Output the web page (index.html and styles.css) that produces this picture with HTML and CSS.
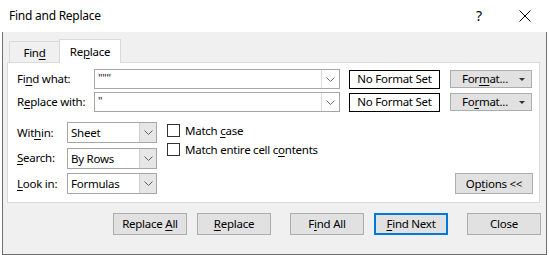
FILE: index.html
```html
<!DOCTYPE html>
<html>
<head>
<meta charset="utf-8">
<link rel="stylesheet" href="styles.css">
</head>
<body>
<div class="window">
  <div class="titlebar">
    <span class="title">Find and Replace</span>
    <span class="help">?</span>
    <svg class="close" width="12" height="12" viewBox="0 0 12 12"><path d="M0.5 0.5 L11.5 11.5 M11.5 0.5 L0.5 11.5" stroke="#000" stroke-width="1" fill="none"/></svg>
  </div>
  <div class="body">
    <div class="tabs">
      <div class="tab"><span>Fin<u>d</u></span></div>
      <div class="tab active"><span>Re<u>p</u>lace</span></div>
    </div>
    <div class="panel">
      <div class="row">
        <label class="lbl wide">Fi<u>n</u>d what:</label>
        <div class="combo"><span class="combo-text">"""</span><span class="combo-btn"><svg width="9" height="5" viewBox="0 0 9 5"><path d="M0.5 0.5 L4.5 4.5 L8.5 0.5" stroke="#707070" fill="none"/></svg></span></div>
        <div class="nofmt">No Format Set</div>
        <div class="btn fmt"><span>For<u>m</u>at...</span><span class="tri"></span></div>
      </div>
      <div class="row">
        <label class="lbl wide">R<u>e</u>place with:</label>
        <div class="combo"><span class="combo-text">"</span><span class="combo-btn"><svg width="9" height="5" viewBox="0 0 9 5"><path d="M0.5 0.5 L4.5 4.5 L8.5 0.5" stroke="#707070" fill="none"/></svg></span></div>
        <div class="nofmt">No Format Set</div>
        <div class="btn fmt"><span>Fo<u>r</u>mat...</span><span class="tri"></span></div>
      </div>
      <div class="options-area">
        <div class="grid-sel">
          <label class="lbl">Wit<u>h</u>in:</label>
          <div class="select"><span class="sel-text">Sheet</span><span class="sel-btn"><svg width="9" height="5" viewBox="0 0 9 5"><path d="M0.5 0.5 L4.5 4.5 L8.5 0.5" stroke="#606060" fill="none"/></svg></span></div>
          <label class="lbl"><u>S</u>earch:</label>
          <div class="select"><span class="sel-text">By Rows</span><span class="sel-btn"><svg width="9" height="5" viewBox="0 0 9 5"><path d="M0.5 0.5 L4.5 4.5 L8.5 0.5" stroke="#606060" fill="none"/></svg></span></div>
          <label class="lbl"><u>L</u>ook in:</label>
          <div class="select"><span class="sel-text">Formulas</span><span class="sel-btn"><svg width="9" height="5" viewBox="0 0 9 5"><path d="M0.5 0.5 L4.5 4.5 L8.5 0.5" stroke="#606060" fill="none"/></svg></span></div>
        </div>
        <div class="checks">
          <div class="check"><span class="box"></span><span>Match <u>c</u>ase</span></div>
          <div class="check"><span class="box"></span><span>Match entire cell c<u>o</u>ntents</span></div>
        </div>
        <div class="spacer"></div>
        <div class="btn options"><span>Op<u>t</u>ions &lt;&lt;</span></div>
      </div>
    </div>
    <div class="actions">
      <div class="btn act"><span>Replace <u>A</u>ll</span></div>
      <div class="btn act"><span><u>R</u>eplace</span></div>
      <div class="btn act wide-gap"><span>F<u>i</u>nd All</span></div>
      <div class="btn act default"><span><u>F</u>ind Next</span></div>
      <div class="btn act wide-gap"><span>Close</span></div>
    </div>
  </div>
</div>
</body>
</html>
```

FILE: styles.css
```css
* { box-sizing: border-box; }
html, body { margin: 0; padding: 0; background: #ffffff; }
body {
  font-family: "Noto Sans", "DejaVu Sans", sans-serif;
  font-size: 11.5px;
  letter-spacing: -0.25px;
  color: #000;
}
u { text-decoration: underline; text-underline-offset: 2px; text-decoration-thickness: 1px; }
.window { width: 549px; height: 255px; display: flex; flex-direction: column; }
.titlebar {
  height: 32px;
  background: #fff;
  display: flex;
  align-items: center;
  padding-left: 9px;
  flex: none;
}
.title { font-size: 12px; line-height: 16px; }
.help { margin-left: auto; font-size: 14px; line-height: 16px; margin-right: 37px; letter-spacing: 0; }
.close { margin-right: 18px; }
.body {
  flex: 1;
  margin: 0 2px;
  background: #f0f0f0;
  border: 1px solid #6f6f6f;
  border-top: none;
  display: flex;
  flex-direction: column;
}
.tabs {
  display: flex;
  align-items: flex-end;
  margin-left: 6px;
  margin-top: 7px;
  height: 23px;
  position: relative;
  z-index: 1;
}
.tab {
  height: 21px;
  width: 51px;
  border: 1px solid #d9d9d9;
  border-bottom: none;
  background: #f0f0f0;
  display: flex;
  align-items: center;
  justify-content: center;
  line-height: 14px;
  padding-top: 1px;
}
.tab.active {
  width: 62px;
  height: 24px;
  background: #fff;
  margin-left: -1px;
  margin-bottom: -1px;
  padding-top: 0;
}
.panel {
  margin-left: 4px;
  width: 533px;
  height: 141px;
  background: #fff;
  border: 1px solid #d9d9d9;
  padding: 6px 0 7px 9px;
  display: flex;
  flex-direction: column;
  gap: 3px;
}
.row {
  display: flex;
  align-items: center;
  height: 20px;
}
.lbl { line-height: 16px; white-space: nowrap; }
.lbl.wide { width: 77px; flex: none; }
.combo {
  width: 246px;
  height: 20px;
  border: 1px solid #a6a6a6;
  display: flex;
  background: #fff;
}
.combo-text { flex: 1; padding-left: 3px; line-height: 16px; font-size: 11px; color: #222; }
.combo-btn {
  width: 18px;
  border-left: 1px solid #dcdcdc;
  display: flex;
  align-items: center;
  justify-content: center;
}
.nofmt {
  width: 91px;
  margin-left: 9px;
  height: 19px;
  border: 1px solid #000;
  display: flex;
  align-items: center;
  justify-content: center;
  line-height: 14px;
  background: #fff;
  white-space: nowrap;
}
.btn {
  background: #e1e1e1;
  border: 1px solid #adadad;
  display: flex;
  align-items: center;
  justify-content: center;
  line-height: 14px;
  white-space: nowrap;
}
.btn.fmt {
  width: 82px;
  margin-left: 10px;
  height: 18px;
  justify-content: flex-end;
  padding-right: 6px;
  gap: 11px;
}
.tri {
  width: 0; height: 0;
  border-left: 3px solid transparent;
  border-right: 3px solid transparent;
  border-top: 3px solid #333;
}
.options-area {
  display: flex;
  margin-top: 7px;
  flex: 1;
}
.grid-sel {
  display: grid;
  grid-template-columns: 50px 90px;
  grid-auto-rows: 21px;
  row-gap: 4.5px;
  align-items: center;
  align-content: start;
}
.select {
  height: 21px;
  border: 1px solid #a6a6a6;
  display: flex;
  background: #fff;
}
.sel-text { flex: 1; padding-left: 3px; line-height: 19px; }
.sel-btn {
  width: 17px;
  background: #e6e6e6;
  border-left: 1px solid #cfcfcf;
  display: flex;
  align-items: center;
  justify-content: center;
}
.checks {
  margin-left: 10px;
  padding-top: 2px;
  display: flex;
  flex-direction: column;
  gap: 6px;
}
.check { display: flex; align-items: center; gap: 5px; height: 13px; line-height: 13px; white-space: nowrap; }
.box { width: 13px; height: 13px; border: 1px solid #333; background: #fff; flex: none; }
.spacer { flex: 1; }
.btn.options {
  align-self: flex-end;
  width: 78px;
  height: 21px;
  margin-right: 6px;
  margin-bottom: 1px;
}
.actions {
  display: flex;
  margin-top: 10px;
  margin-left: 110px;
  gap: 10px;
}
.btn.act { width: 74px; height: 22px; }
.btn.act.wide-gap { margin-left: 9px; }
.btn.default { border: 2px solid #0078d7; }
```
